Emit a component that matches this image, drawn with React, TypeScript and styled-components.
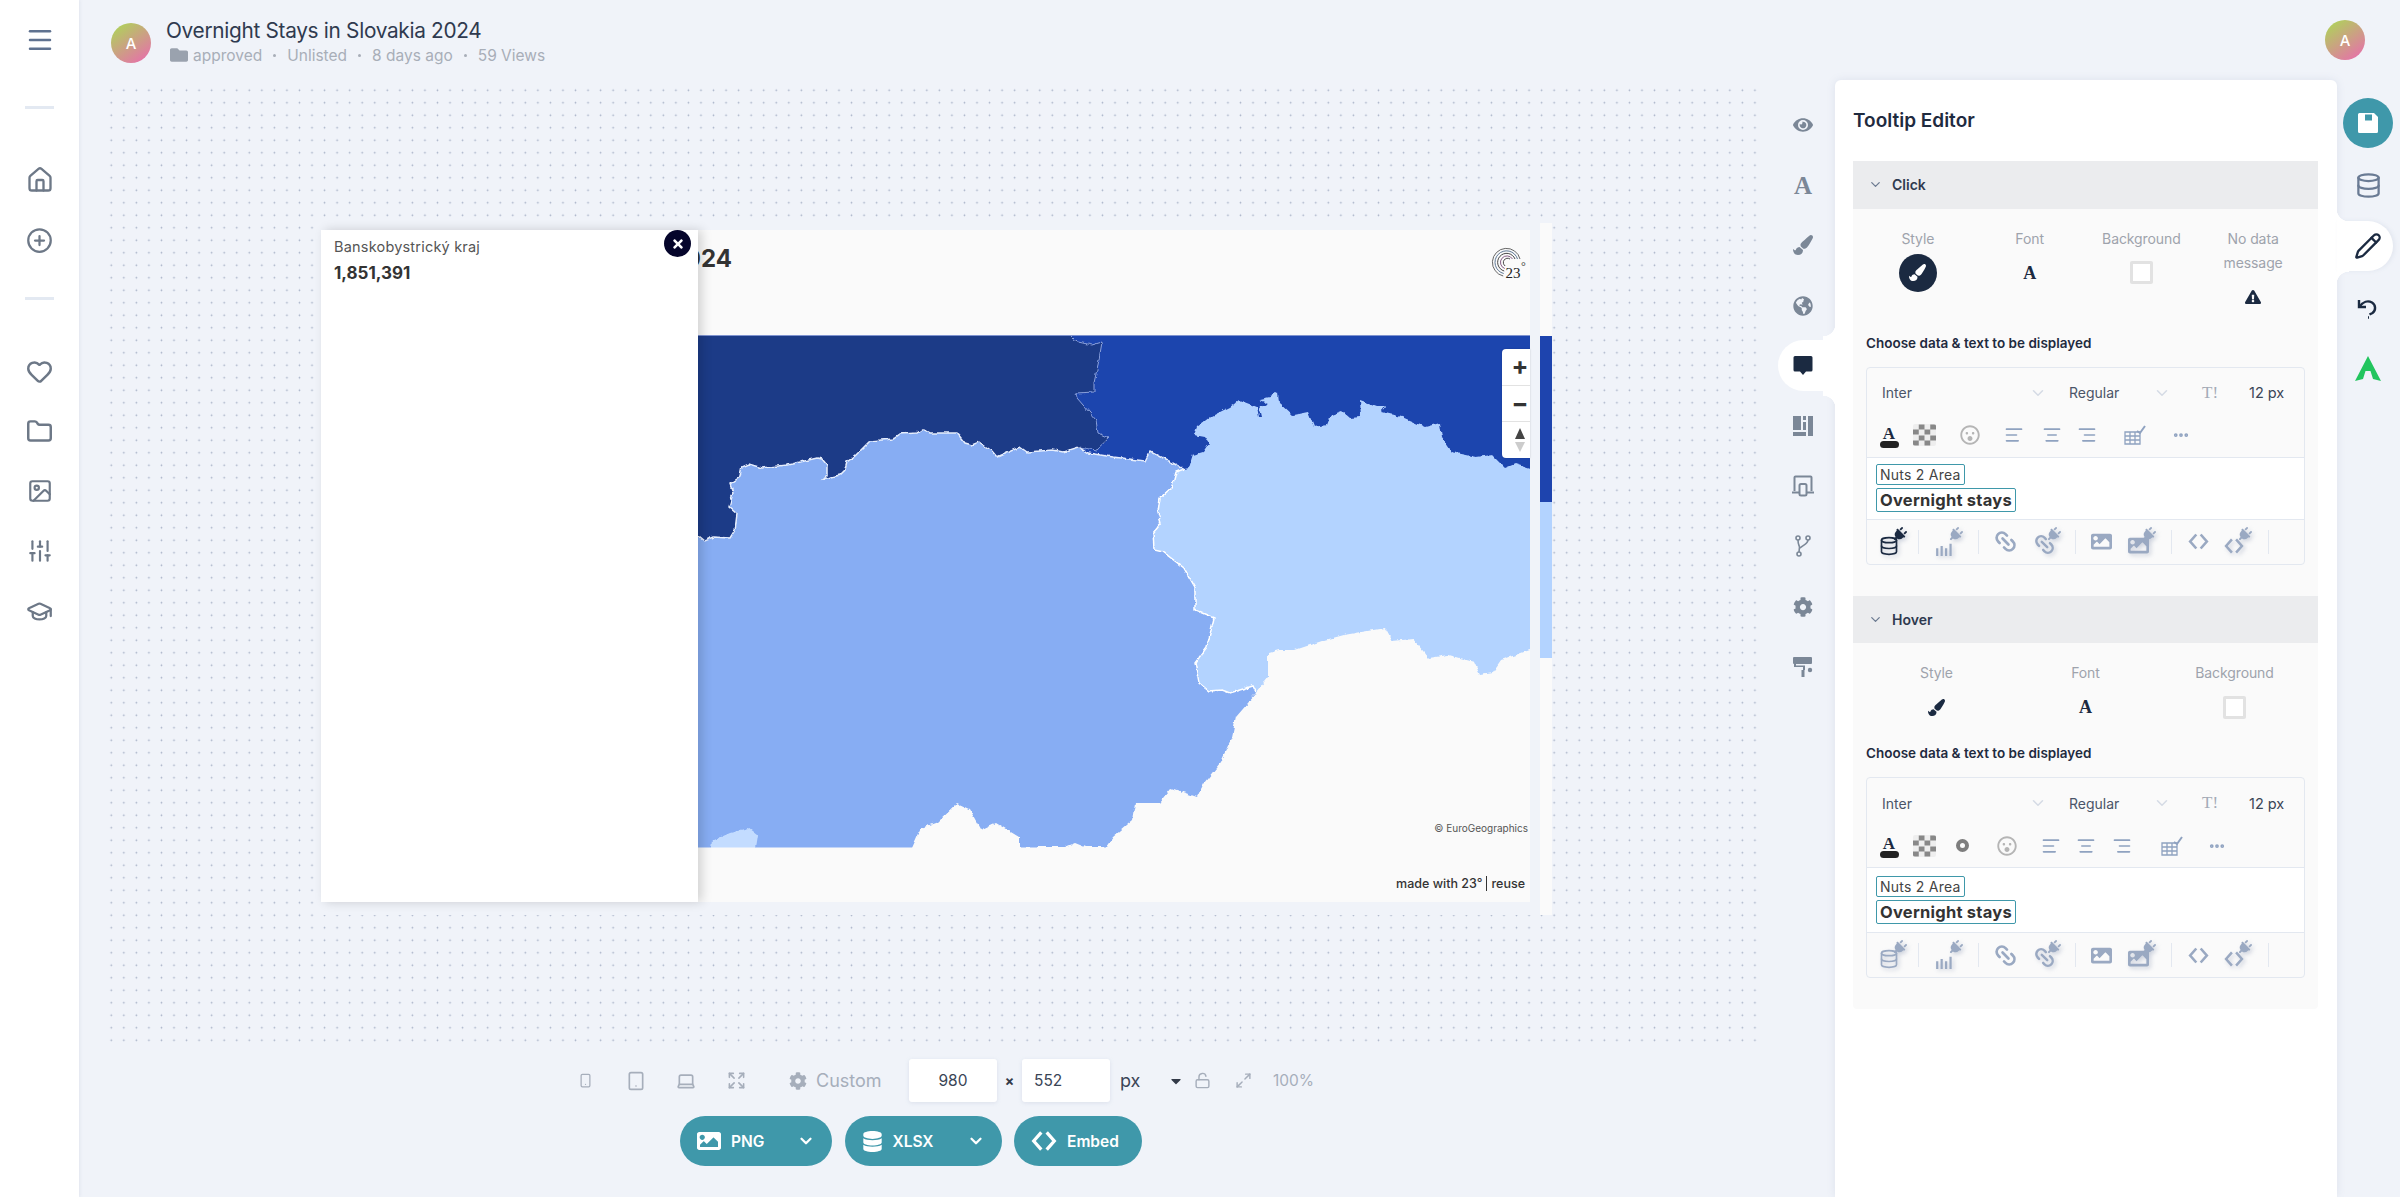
import React from "react";
import styled, { createGlobalStyle } from "styled-components";
import {
  AlignCenter,
  AlignLeft,
  AlignRight,
  ChevronDown,
  CirclePlus,
  Database,
  Ellipsis,
  Expand,
  Folder,
  GraduationCap,
  Heart,
  House,
  Image as ImageIcon,
  Laptop,
  Link2,
  LockOpen,
  Maximize2,
  Menu,
  Pencil,
  SlidersVertical,
  Smartphone,
  Tablet,
} from "lucide-react";
import {
  FaCaretDown,
  FaCog,
  FaDatabase,
  FaExclamationTriangle,
  FaEye,
  FaFolder,
  FaGlobeAmericas,
  FaImage,
  FaPaintBrush,
  FaPlug,
  FaRegSurprise,
  FaTimes,
} from "react-icons/fa";

const TEAL = "#3f98aa";
const NAVY = "#1b2a41";
const PAGE = "#f0f3f9";
const BODY_FONT = `Inter, "Noto Sans", sans-serif`;

const GlobalStyle = createGlobalStyle`
  html, body {
    margin: 0;
    padding: 0;
    background: ${PAGE};
    font-family: ${BODY_FONT};
  }
  * { box-sizing: border-box; }
`;

const Page = styled.div`
  display: flex;
  width: 2400px;
  height: 1197px;
  overflow: hidden;
  background: ${PAGE};
`;

/* left navigation */
const Sidebar = styled.nav`
  flex: 0 0 79px;
  display: flex;
  flex-direction: column;
  align-items: center;
  padding-top: 10px;
  background: #ffffff;
  box-shadow: 1px 0 3px rgba(120, 135, 165, 0.12);
  color: #6d7887;
`;

const NavItem = styled.div<{ $color?: string }>`
  display: flex;
  align-items: center;
  justify-content: center;
  flex: 0 0 60px;
  width: 100%;
  color: ${(p) => p.$color || "inherit"};
`;

const NavDivider = styled.div<{ $top: number; $bottom: number }>`
  flex: 0 0 3px;
  width: 29px;
  margin: ${(p) => p.$top}px 0 ${(p) => p.$bottom}px;
  background: #e3e9f2;
`;

const MainArea = styled.div`
  flex: 1;
  display: flex;
  flex-direction: column;
  min-width: 0;
`;

/* top header */
const Header = styled.header`
  flex: 0 0 80px;
  display: flex;
  align-items: center;
  padding: 0 35px 0 32px;
`;

const Identity = styled.div`
  display: flex;
  align-items: center;
  gap: 15px;
  margin-top: 6px;
`;

const Avatar = styled.div`
  display: flex;
  align-items: center;
  justify-content: center;
  width: 40px;
  height: 40px;
  border-radius: 50%;
  background: linear-gradient(145deg, #b0d05c 10%, #e573a8 90%);
  color: #ffffff;
  font-size: 15px;
  font-weight: 500;
`;

const AccountAvatar = styled(Avatar)`
  margin-left: auto;
`;

const TitleBlock = styled.div`
  display: flex;
  flex-direction: column;
  margin-top: -2px;
`;

const PageTitle = styled.div`
  font-size: 20.8px;
  line-height: 26px;
  letter-spacing: -0.3px;
  color: #2f3a4f;
`;

const MetaRow = styled.div`
  display: flex;
  align-items: center;
  height: 22px;
  padding-left: 4px;
  font-size: 15.5px;
  color: #a8aeb8;
`;

const MetaIcon = styled.span`
  display: flex;
  margin-right: 5px;
  color: #9aa2ae;
`;

const MetaDot = styled.span`
  width: 3px;
  height: 3px;
  margin: 0 11px;
  border-radius: 50%;
  background: #a8aeb8;
`;

const Workspace = styled.div`
  flex: 1;
  display: flex;
  min-height: 0;
`;

const CenterColumn = styled.div`
  flex: 0 0 1700px;
  display: flex;
  flex-direction: column;
  padding-top: 4px;
`;

/* dotted canvas with the chart */
const Canvas = styled.div`
  flex: 0 0 964px;
  width: 1660px;
  margin-left: 26px;
  padding: 139px 0 0 216px;
  background-image: radial-gradient(circle, #a3aec4 0.7px, transparent 1.1px);
  background-size: 12.55px 12.5px;
`;

const ChartFrame = styled.div`
  display: flex;
  width: 1231px;
  height: 692px;
  background: ${PAGE};
`;

const ChartCard = styled.div`
  position: relative;
  flex: 0 0 1209px;
  height: 672px;
  margin-top: 7px;
  display: flex;
  flex-direction: column;
  background: #fafafa;
`;

const OverflowStrip = styled.div`
  flex: 0 0 12px;
  margin-left: 10px;
  background: linear-gradient(
    #fafafa 0 113px,
    #1e44ae 113px 279px,
    #b3d3ff 279px 435px,
    #fafafa 435px
  );
`;

const ChartHeader = styled.div`
  flex: 0 0 106px;
  display: flex;
  align-items: flex-start;
  justify-content: space-between;
  padding-top: 14px;
`;

const ChartTitle = styled.div`
  width: 411px;
  text-align: right;
  white-space: nowrap;
  font-size: 24px;
  line-height: 30px;
  font-weight: 700;
  color: #333333;
`;

const LogoMark = styled.svg`
  width: 40px;
  height: 40px;
  margin-top: 1px;
`;

const MapArea = styled.div`
  position: relative;
  flex: 0 0 512px;
  box-shadow: 0 -1px 0 #7f93cf;
`;

const MapSvg = styled.svg`
  display: block;
  width: 1209px;
  height: 512px;
`;

const ZoomControl = styled.div`
  position: absolute;
  top: 13px;
  right: 0;
  display: flex;
  flex-direction: column;
  width: 28px;
  height: 109px;
  border-radius: 4px 0 0 4px;
  background: #ffffff;
  box-shadow: 0 0 2px rgba(0, 0, 0, 0.2);
`;

const ZoomButton = styled.div`
  flex: 1;
  display: flex;
  flex-direction: column;
  align-items: center;
  justify-content: center;
  gap: 3px;
  padding-left: 8px;
  border-bottom: 1px solid #e2e2e2;
  color: #333333;
  font-size: 25px;
  font-weight: 700;
  line-height: 1;
  &:last-child { border-bottom: 0; }
`;

const Triangle = styled.span<{ $down?: boolean }>`
  width: 0;
  height: 0;
  border-left: 5px solid transparent;
  border-right: 5px solid transparent;
  border-bottom: ${(p) => (p.$down ? "0" : "11px solid #444444")};
  border-top: ${(p) => (p.$down ? "10px solid #cccccc" : "0")};
`;

const Copyright = styled.div`
  position: absolute;
  right: 2px;
  bottom: 14px;
  font-size: 10px;
  line-height: 12px;
  color: #555555;
`;

const ChartFooter = styled.div`
  flex: 1;
  display: flex;
  align-items: center;
  justify-content: flex-end;
  padding: 16px 5px 0 0;
  font-size: 12.5px;
  font-weight: 500;
  color: #333333;
`;

const FooterBar = styled.span`
  width: 1px;
  height: 15px;
  margin: 0 4px;
  background: #333333;
`;

/* fixed tooltip shown over the chart */
const MapTooltip = styled.div`
  position: absolute;
  top: 0;
  left: 0;
  width: 377px;
  height: 672px;
  padding: 8px 13px;
  background: #ffffff;
  box-shadow: 4px 0 10px rgba(0, 0, 0, 0.16);
`;

const TooltipArea = styled.div`
  font-size: 14.5px;
  line-height: 18px;
  letter-spacing: 0.2px;
  color: #555555;
`;

const TooltipValue = styled.div`
  margin-top: 6px;
  font-size: 17px;
  line-height: 22px;
  font-weight: 700;
  color: #333333;
`;

const CloseButton = styled.div`
  position: absolute;
  top: 0;
  right: 7px;
  display: flex;
  align-items: center;
  justify-content: center;
  width: 27px;
  height: 27px;
  border-radius: 50%;
  background: #05052b;
  color: #ffffff;
`;

/* size controls under the canvas */
const SizeBar = styled.div`
  flex: 0 0 43px;
  display: flex;
  align-items: center;
  margin-top: 11px;
  padding-left: 491px;
  color: #a6aebb;
`;

const DeviceButton = styled.div`
  flex: 0 0 30px;
  display: flex;
  justify-content: center;
  margin-right: 20.5px;
`;

const CustomLabel = styled.div`
  display: flex;
  align-items: center;
  gap: 9px;
  width: 123px;
  margin-left: 14px;
  padding-left: 3px;
  font-size: 18px;
  color: #a6aebb;
`;

const SizeInput = styled.div<{ $left?: boolean }>`
  flex: 0 0 88px;
  height: 43px;
  padding-left: ${(p) => (p.$left ? "12px" : "0")};
  display: flex;
  align-items: center;
  justify-content: ${(p) => (p.$left ? "flex-start" : "center")};
  border-radius: 3px;
  background: #ffffff;
  box-shadow: 0 1px 4px rgba(130, 145, 175, 0.18);
  font-size: 15.5px;
  color: #3a4556;
`;

const Times = styled.div`
  flex: 0 0 25px;
  text-align: center;
  font-size: 14px;
  font-weight: 700;
  color: #333a48;
`;

const Unit = styled.div`
  flex: 0 0 55px;
  padding-left: 10px;
  font-size: 18px;
  color: #3a4556;
`;

const SizeTool = styled.div<{ $w: number; $color?: string }>`
  flex: 0 0 ${(p) => p.$w}px;
  display: flex;
  justify-content: center;
  color: ${(p) => p.$color || "#a6aebb"};
`;

const ZoomPercent = styled.div`
  margin-left: 4px;
  font-size: 15.5px;
  color: #a6aebb;
`;

const ExportBar = styled.div`
  display: flex;
  gap: 12.5px;
  margin-top: 14px;
  padding-left: 601px;
`;

const ExportButton = styled.div<{ $w: number }>`
  flex: 0 0 ${(p) => p.$w}px;
  display: flex;
  align-items: center;
  height: 50px;
  padding: 0 17px;
  border-radius: 25px;
  background: ${TEAL};
  color: #ffffff;
  font-size: 15.5px;
  font-weight: 600;
`;

const ExportLabel = styled.span`
  margin-left: 10px;
  flex: 1;
`;

/* tabs left of the panel */
const TabRail = styled.div`
  flex: 0 0 57px;
  margin-left: -1px;
  padding-top: 15px;
  color: #7b8797;
`;

const TabItem = styled.div<{ $active?: boolean }>`
  position: relative;
  display: flex;
  align-items: center;
  justify-content: center;
  height: 60.2px;
  padding-right: 7px;
  color: ${(p) => (p.$active ? NAVY : "inherit")};
  ${(p) =>
    p.$active &&
    `
    &::before {
      content: "";
      position: absolute;
      inset: 4.6px 0 4.6px 0;
      border-radius: 25.5px 0 0 25.5px;
      background: #ffffff;
    }
    &::after {
      content: "";
      position: absolute;
      top: -12px;
      bottom: -12px;
      right: 0;
      width: 12px;
      background:
        radial-gradient(circle at 0 0, transparent 12px, #fff 12.5px) 0 0 / 12px 17px no-repeat,
        radial-gradient(circle at 0 100%, transparent 12px, #fff 12.5px) 0 100% / 12px 17px no-repeat;
    }
    & > * { position: relative; z-index: 1; }
  `}
`;

const SerifGlyph = styled.span<{ $size: number; $color?: string }>`
  font-family: "Liberation Serif", serif;
  font-size: ${(p) => p.$size}px;
  line-height: 1;
  font-weight: 700;
  color: ${(p) => p.$color || "inherit"};
`;

/* editor panel */
const Panel = styled.aside`
  flex: 0 0 502px;
  padding: 0 19px 0 18px;
  border-radius: 6px 6px 0 0;
  background: #ffffff;
  box-shadow: 0 0 8px rgba(110, 125, 160, 0.14);
`;

const PanelTitle = styled.div`
  display: flex;
  align-items: center;
  height: 81px;
  font-size: 19px;
  font-weight: 600;
  color: #1f2b3f;
`;

const Section = styled.section`
  display: flow-root;
  background: #fafafa;
  &:last-child { border-radius: 0 0 4px 4px; }
`;

const SectionHeader = styled.div`
  display: flex;
  align-items: center;
  gap: 9px;
  height: 47.5px;
  padding-left: 15px;
  background: #ebecee;
  font-size: 14px;
  font-weight: 600;
  color: #2f3a4f;
`;

const OptionGrid = styled.div<{ $columns: number }>`
  display: grid;
  grid-template-columns: repeat(${(p) => p.$columns}, 1fr);
  padding: 18px 9px 0;
`;

const OptionCol = styled.div<{ $short?: boolean }>`
  display: flex;
  flex-direction: column;
  align-items: center;
  min-height: ${(p) => (p.$short ? 65 : 89)}px;
`;

const OptionLabel = styled.div`
  text-align: center;
  font-size: 14px;
  line-height: 24px;
  letter-spacing: -0.1px;
  color: #9ea3ac;
`;

const OptionIcon = styled.div<{ $selected?: boolean }>`
  display: flex;
  align-items: center;
  justify-content: center;
  width: 38px;
  height: 38px;
  margin-top: 3px;
  border-radius: 50%;
  background: ${(p) => (p.$selected ? NAVY : "transparent")};
  color: ${(p) => (p.$selected ? "#ffffff" : NAVY)};
`;

const EmptySwatch = styled.div`
  width: 23px;
  height: 23px;
  border: 3px solid #e2e2e2;
  border-radius: 2px;
  background: #ffffff;
`;

const ChooseLabel = styled.div`
  margin-top: 17px;
  padding-left: 13px;
  font-size: 13.5px;
  line-height: 20px;
  font-weight: 600;
  color: #1f2b3f;
`;

const EditorBox = styled.div`
  width: 439px;
  margin: 14px 0 31px 13px;
  border: 1px solid #e3e8f0;
  border-radius: 4px;
  background: #fafafa;
`;

const FontRow = styled.div`
  display: flex;
  align-items: center;
  height: 50px;
  padding-left: 15px;
  font-size: 14px;
  color: #4a5568;
`;

const FontSelect = styled.div<{ $w: number }>`
  flex: 0 0 ${(p) => p.$w}px;
  display: flex;
  align-items: center;
  justify-content: space-between;
  margin-right: 22px;
  color: #4a5568;
`;

const FaintChevron = styled(ChevronDown)`
  color: #d5dbe5;
`;

const FontSizeIcon = styled.span`
  flex: 0 0 24px;
  margin-left: 9px;
  font-family: "Liberation Serif", serif;
  font-size: 17px;
  color: #a4abb6;
`;

const FontSize = styled.div`
  margin-left: 23px;
  font-size: 14.5px;
  color: #3a4556;
`;

const FormatRow = styled.div`
  display: flex;
  align-items: center;
  height: 40px;
  padding: 0 0 4px 8px;
  border-bottom: 1px solid #e3e8f0;
  color: #8fa2c0;
`;

const Tool = styled.div<{ $w: number }>`
  flex: 0 0 ${(p) => p.$w}px;
  display: flex;
  justify-content: center;
  align-items: center;
`;

const ColorA = styled.div`
  display: flex;
  flex-direction: column;
  align-items: center;
  margin-top: 2px;
`;

const ColorBar = styled.div`
  width: 19px;
  height: 7px;
  margin-top: -1px;
  border-radius: 4px;
  background: #222222;
`;

const Checker = styled.div`
  width: 23px;
  height: 22px;
  border-radius: 2px;
  background: repeating-conic-gradient(#888888 0 25%, #eeeeee 0 50%) 50% / 11.5px 11px;
`;

const Ring = styled.div`
  width: 13px;
  height: 13px;
  border: 4px solid #7d7d7d;
  border-radius: 50%;
`;

const Content = styled.div<{ $tall?: boolean }>`
  display: flex;
  flex-direction: column;
  align-items: flex-start;
  gap: 3px;
  height: ${(p) => (p.$tall ? 65 : 62)}px;
  padding: ${(p) => (p.$tall ? 8 : 6)}px 0 0 9px;
  border-bottom: 1px solid #e3e8f0;
  background: #ffffff;
`;

const AreaChip = styled.div`
  height: 21px;
  padding: 0 3px;
  border: 1px solid ${TEAL};
  border-radius: 2px;
  font-size: 14px;
  line-height: 19px;
  letter-spacing: 0.25px;
  color: #444444;
`;

const ValueChip = styled.div`
  height: 24px;
  padding: 0 3px;
  border: 1px solid ${TEAL};
  border-radius: 2px;
  font-size: 16.5px;
  line-height: 22px;
  font-weight: 700;
  letter-spacing: 0.25px;
  color: #333333;
`;

const InsertRow = styled.div`
  display: flex;
  align-items: center;
  height: 44px;
`;

const InsertGroup = styled.div<{ $w: number }>`
  flex: 0 0 ${(p) => p.$w}px;
  height: 24px;
  display: flex;
  align-items: center;
  justify-content: space-evenly;
  border-right: 1px solid #e3e8f0;
`;

const PluggedIcon = styled.div<{ $dark?: boolean }>`
  position: relative;
  display: flex;
  align-items: flex-end;
  width: 28px;
  height: 28px;
  color: ${(p) => (p.$dark ? NAVY : "#9aa9c2")};
  filter: drop-shadow(2px 2px 2px rgba(120, 135, 165, 0.35));
`;

const PlugMark = styled.span`
  position: absolute;
  top: -1px;
  right: 0;
  display: flex;
  transform: rotate(45deg);
`;

const FlatIcon = styled.div`
  display: flex;
  color: #9aa9c2;
`;

/* rail right of the panel */
const RightRail = styled.div`
  flex: 0 0 62px;
  padding-top: 18px;
`;

const RailItem = styled.div<{ $active?: boolean; $color?: string }>`
  position: relative;
  display: flex;
  align-items: center;
  justify-content: center;
  width: 56px;
  height: 61px;
  padding-left: 6px;
  color: ${(p) => p.$color || "#6a7b94"};
  ${(p) =>
    p.$active &&
    `
    &::before {
      content: "";
      position: absolute;
      inset: 5.5px 0;
      border-radius: 0 25px 25px 0;
      background: #ffffff;
      box-shadow: 2px 0 4px rgba(110, 125, 160, 0.1);
    }
    &::after {
      content: "";
      position: absolute;
      top: -7px;
      bottom: -7px;
      left: 0;
      width: 12px;
      background:
        radial-gradient(circle at 100% 0, transparent 12px, #fff 12.5px) 0 0 / 12px 13px no-repeat,
        radial-gradient(circle at 100% 100%, transparent 12px, #fff 12.5px) 0 100% / 12px 13px no-repeat;
    }
    & > * { position: relative; z-index: 1; }
  `}
`;

const SaveButton = styled.div`
  display: flex;
  align-items: center;
  justify-content: center;
  width: 50px;
  height: 50px;
  margin: 0 0 6.5px 6px;
  border-radius: 50%;
  background: ${TEAL};
`;

const CodeIcon = ({ size, weight = 3 }: { size: number; weight?: number }) => (
  <svg width={size} height={size} viewBox="0 0 24 24" fill="none" stroke="currentColor" strokeWidth={weight}>
    <path d="M9.5 4 2.5 12l7 8M14.5 4l7 8-7 8" />
  </svg>
);

const CommentIcon = () => (
  <svg width="20" height="22" viewBox="0 0 20 22" fill="currentColor">
    <path d="M2 1h16a1.5 1.5 0 0 1 1.5 1.500V15a1.500 1.500 0 0 1-1.500 1.500h-5L10 20l-3-3.500H2A1.500 1.500 0 0 1 .5 15V2.500A1.500 1.500 0 0 1 2 1z" />
  </svg>
);

const LayoutIcon = () => (
  <svg width="20" height="20" viewBox="0 0 20 20" fill="currentColor">
    <path d="M0 0h8v14H0zM10 0h3v4h-3zM15 0h5v20h-5zM10 6h3v8h-3zM0 16h13v4H0z" />
  </svg>
);

const ScreenIcon = () => (
  <svg width="24" height="22" viewBox="0 0 24 22" fill="none" stroke="currentColor" strokeWidth="2">
    <path d="M3.500 16V2.500a1 1 0 0 1 1-1h15a1 1 0 0 1 1 1V16M1 17.500h7M16 17.500h7" />
    <rect x="8.500" y="9" width="7" height="11.500" rx="1.500" />
  </svg>
);

const ForkIcon = () => (
  <svg width="16" height="22" viewBox="0 0 16 22" fill="none" stroke="currentColor" strokeWidth="1.6">
    <circle cx="3" cy="3" r="2" />
    <circle cx="13" cy="3" r="2" />
    <circle cx="4" cy="19" r="2" />
    <path d="M3 5c0 4 1 5 1.500 7M13 5c0 4-5 5-8 8M4 17l.5-5" />
  </svg>
);

const RollerIcon = () => (
  <svg width="20" height="20" viewBox="0 0 20 20" fill="currentColor">
    <rect x="0" y="0" width="19" height="7" rx="1" />
    <path d="M1 7v3h9v3H8.500v7h3v-7H12V8.500H3V7z" />
    <circle cx="17" cy="13" r="2.200" />
  </svg>
);

const SaveGlyph = () => (
  <svg width="20" height="20" viewBox="0 0 20 20">
    <path d="M1.500 0H16l4 4v14.500a1.500 1.500 0 0 1-1.500 1.500h-17A1.500 1.500 0 0 1 0 18.500v-17A1.500 1.500 0 0 1 1.500 0z" fill="#ffffff" />
    <rect x="7" y="1.500" width="7" height="6" fill={TEAL} />
  </svg>
);

const UndoGlyph = () => (
  <svg width="24" height="24" viewBox="0 0 24 24" fill="none" stroke="currentColor" strokeWidth="2.400">
    <path d="M3 5v7h7" />
    <path d="M3.500 12C7 6.500 12 5.500 16 7.500c4 2.500 4 8 .5 10.500l-3 1.500" />
    <path d="M12 22.500h1" />
  </svg>
);

const GreenArrow = () => (
  <svg width="26" height="25" viewBox="0 0 26 25" fill="currentColor">
    <path d="M13 0 26 25l-8-2-2.500-8h-5L8 23 0 25z" />
  </svg>
);

const TableGlyph = () => (
  <svg width="22" height="20" viewBox="0 0 22 20" fill="none" stroke="currentColor" strokeWidth="1.300">
    <path d="M1 7h15v12H1zM1 11h15M1 15h15M6 7v12M11 7v12" />
    <path d="M13 6l3 2 5-7" strokeWidth="2" />
  </svg>
);

const ROUTE_DARK =
  "698,536 704,541 713,537 730,538 735,530 737,514 729,507 733,493 730,484 740,477 742,467 749,464 762,468 787,465 792,464 817,458 822,459 827,465 827,475 823,479 840,475 845,470 847,462 855,456 870,441 893,439 900,434 917,433 923,429 930,433 957,433 965,443 972,445 979,442 992,451 997,457 1020,447 1027,452 1053,450 1063,452 1079,447";
const ROUTE_MID_EAST =
  "1088,453 1113,457 1145,461 1150,451 1184,469";
const ROUTE_NE_BORDER =
  "1070,330 1070,336 1073,339 1078,342 1092,345 1102,342 1099,360 1094,383 1094,392 1076,393 1077,398 1096,420 1098,433 1109,438 1096,450 1079,447";
const ROUTE_LIGHT_MID =
  "1184,469 1176,472 1172,487 1160,498 1158,513 1161,523 1153,533 1154,550 1163,552 1184,568 1195,587 1195,610 1214,618 1207,647 1195,663 1199,683 1209,691 1222,690 1230,693 1253,686 1256,692";
const ROUTE_LIGHT_TOP =
  "1184,469 1189,468 1193,455 1203,452 1209,443 1205,437 1194,435 1197,427 1210,417 1230,407 1239,400 1257,407 1259,417 1261,417 1259,408 1268,403 1260,400 1270,398 1274,391 1278,393 1279,402 1293,415 1308,412 1314,427 1327,425 1331,415 1342,411 1350,418 1361,417 1360,400 1377,406 1386,406 1381,412 1402,417 1425,427 1440,423 1442,437 1452,452 1476,457 1492,455 1505,468 1515,464 1540,472";
const ROUTE_LIGHT_SOUTH =
  "1540,472 1540,647 1530,650 1501,660 1492,673 1480,675 1474,662 1448,655 1429,658 1413,639 1392,641 1385,628 1344,635 1325,640 1295,650 1279,650 1268,653 1268,677 1256,692";
const ROUTE_MID_SOUTH =
  "1255,695 1236,717 1232,737 1220,763 1204,783 1197,797 1171,788 1159,803 1136,803 1133,820 1113,837 1106,847 1085,847 1075,843 1065,847 1019,847 1019,837 996,823 981,830 970,810 957,804 938,822 921,828 912,848 905,860 321,860 321,536 698,536";

const RegionMap = () => (
  <MapSvg viewBox="321 336 1209 512">
    <defs>
      <filter id="rough-edge" filterUnits="userSpaceOnUse" x="300" y="320" width="1260" height="550">
        <feTurbulence type="fractalNoise" baseFrequency="0.16" numOctaves="2" seed="4" />
        <feDisplacementMap in="SourceGraphic" scale="4.5" xChannelSelector="R" yChannelSelector="G" />
      </filter>
    </defs>
    <rect x="321" y="336" width="1209" height="512" fill="#fafafa" />
    <g filter="url(#rough-edge)">
      <rect x="310" y="325" width="1240" height="151" fill="#1e44ae" />
      <polygon
        points={`310,325 1070,325 ${ROUTE_NE_BORDER} ${ROUTE_DARK.split(" ").reverse().join(" ")} 310,536`}
        fill="#1e3a87"
      />
      <polygon points={`${ROUTE_DARK} ${ROUTE_MID_EAST} ${ROUTE_LIGHT_MID} ${ROUTE_MID_SOUTH}`} fill="#87adf3" />
      <polygon points={`${ROUTE_LIGHT_TOP} ${ROUTE_LIGHT_SOUTH} ${ROUTE_LIGHT_MID.split(" ").reverse().join(" ")}`} fill="#b3d3ff" />
      <polygon points="709,860 712,841 730,833 749,828 758,835 754,860" fill="#c3dcff" />
      <polyline points={ROUTE_NE_BORDER} fill="none" stroke="#8aa2dc" strokeWidth="1" />
      <polyline points={`${ROUTE_DARK} ${ROUTE_MID_EAST}`} fill="none" stroke="#e6eefc" strokeWidth="1.500" />
      <polyline points={ROUTE_LIGHT_MID} fill="none" stroke="#ffffff" strokeWidth="1.500" />
    </g>
    <rect x="321" y="847.500" width="1209" height="1" fill="#fafafa" />
  </MapSvg>
);

const Logo = () => (
  <LogoMark viewBox="0 0 40 40">
    {[4, 6.5, 9, 11.5, 14].map((r, i) => (
      <path
        key={r}
        d={`M${16 + r} 14 A${r} ${r} 0 1 0 ${16 - r * 0.2} ${17 + r}`}
        fill="none"
        stroke={["#333", "#7a4d7a", "#333", "#4d6a8a", "#555"][i]}
        strokeWidth="0.9"
      />
    ))}
    <text x="15.500" y="33" fontFamily="Liberation Serif, serif" fontSize="15" fill="#222">
      23
    </text>
    <text x="31" y="25" fontFamily="Liberation Serif, serif" fontSize="12" fill="#444">
      °
    </text>
  </LogoMark>
);

const Plugged = ({ base, dark }: { base: React.ReactNode; dark?: boolean }) => (
  <PluggedIcon $dark={dark}>
    {base}
    <PlugMark>
      <FaPlug size={15} />
    </PlugMark>
  </PluggedIcon>
);

const BarsGlyph = () => (
  <svg width="20" height="20" viewBox="0 0 18 18" fill="currentColor">
    <path d="M1 11h2v7H1zM5 9h2v9H5zM9 11h2v7H9zM13 7h2v11h-2z" />
  </svg>
);

const ChainIcon = styled(Link2)`
  transform: rotate(45deg);
`;

const InsertTools = ({ dark }: { dark?: boolean }) => (
  <InsertRow>
    <InsertGroup $w={52}>
      <Plugged dark={dark} base={<Database size={20} strokeWidth={2} />} />
    </InsertGroup>
    <InsertGroup $w={60}>
      <Plugged base={<BarsGlyph />} />
    </InsertGroup>
    <InsertGroup $w={97}>
      <FlatIcon>
        <ChainIcon size={25} strokeWidth={2.6} />
      </FlatIcon>
      <Plugged base={<ChainIcon size={23} strokeWidth={2.6} />} />
    </InsertGroup>
    <InsertGroup $w={96}>
      <FlatIcon>
        <FaImage size={21} />
      </FlatIcon>
      <Plugged base={<FaImage size={21} />} />
    </InsertGroup>
    <InsertGroup $w={97}>
      <FlatIcon>
        <CodeIcon size={21} />
      </FlatIcon>
      <Plugged base={<CodeIcon size={20} />} />
    </InsertGroup>
  </InsertRow>
);

const FontControls = () => (
  <FontRow>
    <FontSelect $w={165}>
      Inter
      <FaintChevron size={18} />
    </FontSelect>
    <FontSelect $w={102}>
      Regular
      <FaintChevron size={18} />
    </FontSelect>
    <FontSizeIcon>T!</FontSizeIcon>
    <FontSize>12 px</FontSize>
  </FontRow>
);

const TipContent = ({ tall }: { tall?: boolean }) => (
  <Content $tall={tall}>
    <AreaChip>Nuts 2 Area</AreaChip>
    <ValueChip>Overnight stays</ValueChip>
  </Content>
);

const ColorTool = () => (
  <ColorA>
    <SerifGlyph $size={17} $color={NAVY}>
      A
    </SerifGlyph>
    <ColorBar />
  </ColorA>
);

export default function App() {
  return (
    <Page>
      <GlobalStyle />
      <Sidebar>
        <NavItem $color="#5f7290">
          <Menu size={30} strokeWidth={2} />
        </NavItem>
        <NavDivider $top={36} $bottom={41} />
        <NavItem>
          <House size={28} strokeWidth={2} />
        </NavItem>
        <NavItem>
          <CirclePlus size={27} strokeWidth={2} />
        </NavItem>
        <NavDivider $top={27} $bottom={41} />
        <NavItem>
          <Heart size={27} strokeWidth={2.2} />
        </NavItem>
        <NavItem>
          <Folder size={27} strokeWidth={2.2} />
        </NavItem>
        <NavItem>
          <ImageIcon size={26} strokeWidth={2} />
        </NavItem>
        <NavItem>
          <SlidersVertical size={26} strokeWidth={2} />
        </NavItem>
        <NavItem>
          <GraduationCap size={27} strokeWidth={2} />
        </NavItem>
      </Sidebar>

      <MainArea>
        <Header>
          <Identity>
            <Avatar>A</Avatar>
            <TitleBlock>
              <PageTitle>Overnight Stays in Slovakia 2024</PageTitle>
              <MetaRow>
                <MetaIcon>
                  <FaFolder size={18} />
                </MetaIcon>
                approved
                <MetaDot />
                Unlisted
                <MetaDot />8 days ago
                <MetaDot />
                59 Views
              </MetaRow>
            </TitleBlock>
          </Identity>
          <AccountAvatar>A</AccountAvatar>
        </Header>

        <Workspace>
          <CenterColumn>
            <Canvas>
              <ChartFrame>
                <ChartCard>
                  <ChartHeader>
                    <ChartTitle>Overnight Stays in Slovakia 2024</ChartTitle>
                    <Logo />
                  </ChartHeader>
                  <MapArea>
                    <RegionMap />
                    <ZoomControl>
                      <ZoomButton>+</ZoomButton>
                      <ZoomButton>−</ZoomButton>
                      <ZoomButton>
                        <Triangle />
                        <Triangle $down />
                      </ZoomButton>
                    </ZoomControl>
                    <Copyright>© EuroGeographics</Copyright>
                  </MapArea>
                  <ChartFooter>
                    made with 23°
                    <FooterBar />
                    reuse
                  </ChartFooter>
                  <MapTooltip>
                    <TooltipArea>Banskobystrický kraj</TooltipArea>
                    <TooltipValue>1,851,391</TooltipValue>
                    <CloseButton>
                      <FaTimes size={14} />
                    </CloseButton>
                  </MapTooltip>
                </ChartCard>
                <OverflowStrip />
              </ChartFrame>
            </Canvas>

            <SizeBar>
              <DeviceButton>
                <Smartphone size={15} />
              </DeviceButton>
              <DeviceButton>
                <Tablet size={20} />
              </DeviceButton>
              <DeviceButton>
                <Laptop size={20} />
              </DeviceButton>
              <DeviceButton>
                <Expand size={19} />
              </DeviceButton>
              <CustomLabel>
                <FaCog size={18} />
                Custom
              </CustomLabel>
              <SizeInput>980</SizeInput>
              <Times>×</Times>
              <SizeInput $left>552</SizeInput>
              <Unit>px</Unit>
              <SizeTool $w={22} $color="#333a48">
                <FaCaretDown size={16} />
              </SizeTool>
              <SizeTool $w={30}>
                <LockOpen size={17} />
              </SizeTool>
              <SizeTool $w={52}>
                <Maximize2 size={17} />
              </SizeTool>
              <ZoomPercent>100%</ZoomPercent>
            </SizeBar>

            <ExportBar>
              <ExportButton $w={152}>
                <FaImage size={24} />
                <ExportLabel>PNG</ExportLabel>
                <ChevronDown size={18} strokeWidth={3} />
              </ExportButton>
              <ExportButton $w={157}>
                <FaDatabase size={21} />
                <ExportLabel>XLSX</ExportLabel>
                <ChevronDown size={18} strokeWidth={3} />
              </ExportButton>
              <ExportButton $w={128}>
                <CodeIcon size={26} />
                <ExportLabel>Embed</ExportLabel>
              </ExportButton>
            </ExportBar>
          </CenterColumn>

          <TabRail>
            <TabItem>
              <FaEye size={20} />
            </TabItem>
            <TabItem>
              <SerifGlyph $size={25}>A</SerifGlyph>
            </TabItem>
            <TabItem>
              <FaPaintBrush size={20} />
            </TabItem>
            <TabItem>
              <FaGlobeAmericas size={20} />
            </TabItem>
            <TabItem $active>
              <CommentIcon />
            </TabItem>
            <TabItem>
              <LayoutIcon />
            </TabItem>
            <TabItem>
              <ScreenIcon />
            </TabItem>
            <TabItem>
              <ForkIcon />
            </TabItem>
            <TabItem>
              <FaCog size={20} />
            </TabItem>
            <TabItem>
              <RollerIcon />
            </TabItem>
          </TabRail>

          <Panel>
            <PanelTitle>Tooltip Editor</PanelTitle>

            <Section>
              <SectionHeader>
                <ChevronDown size={15} color="#6b7a90" />
                Click
              </SectionHeader>
              <OptionGrid $columns={4}>
                <OptionCol>
                  <OptionLabel>Style</OptionLabel>
                  <OptionIcon $selected>
                    <FaPaintBrush size={17} />
                  </OptionIcon>
                </OptionCol>
                <OptionCol>
                  <OptionLabel>Font</OptionLabel>
                  <OptionIcon>
                    <SerifGlyph $size={18}>A</SerifGlyph>
                  </OptionIcon>
                </OptionCol>
                <OptionCol>
                  <OptionLabel>Background</OptionLabel>
                  <OptionIcon>
                    <EmptySwatch />
                  </OptionIcon>
                </OptionCol>
                <OptionCol>
                  <OptionLabel>
                    No data
                    <br />
                    message
                  </OptionLabel>
                  <OptionIcon>
                    <FaExclamationTriangle size={16} />
                  </OptionIcon>
                </OptionCol>
              </OptionGrid>
              <ChooseLabel>Choose data &amp; text to be displayed</ChooseLabel>
              <EditorBox>
                <FontControls />
                <FormatRow>
                  <Tool $w={28}>
                    <ColorTool />
                  </Tool>
                  <Tool $w={43}>
                    <Checker />
                  </Tool>
                  <Tool $w={48}>
                    <FaRegSurprise size={20} color="#b5b5b5" />
                  </Tool>
                  <Tool $w={40}>
                    <AlignLeft size={20} />
                  </Tool>
                  <Tool $w={35}>
                    <AlignCenter size={20} />
                  </Tool>
                  <Tool $w={35}>
                    <AlignRight size={20} />
                  </Tool>
                  <Tool $w={62}>
                    <TableGlyph />
                  </Tool>
                  <Tool $w={30}>
                    <Ellipsis size={18} strokeWidth={3} />
                  </Tool>
                </FormatRow>
                <TipContent />
                <InsertTools dark />
              </EditorBox>
            </Section>

            <Section>
              <SectionHeader>
                <ChevronDown size={15} color="#6b7a90" />
                Hover
              </SectionHeader>
              <OptionGrid $columns={3}>
                <OptionCol $short>
                  <OptionLabel>Style</OptionLabel>
                  <OptionIcon>
                    <FaPaintBrush size={17} />
                  </OptionIcon>
                </OptionCol>
                <OptionCol $short>
                  <OptionLabel>Font</OptionLabel>
                  <OptionIcon>
                    <SerifGlyph $size={18}>A</SerifGlyph>
                  </OptionIcon>
                </OptionCol>
                <OptionCol $short>
                  <OptionLabel>Background</OptionLabel>
                  <OptionIcon>
                    <EmptySwatch />
                  </OptionIcon>
                </OptionCol>
              </OptionGrid>
              <ChooseLabel>Choose data &amp; text to be displayed</ChooseLabel>
              <EditorBox>
                <FontControls />
                <FormatRow>
                  <Tool $w={28}>
                    <ColorTool />
                  </Tool>
                  <Tool $w={43}>
                    <Checker />
                  </Tool>
                  <Tool $w={32}>
                    <Ring />
                  </Tool>
                  <Tool $w={58}>
                    <FaRegSurprise size={20} color="#b5b5b5" />
                  </Tool>
                  <Tool $w={30}>
                    <AlignLeft size={20} />
                  </Tool>
                  <Tool $w={40}>
                    <AlignCenter size={20} />
                  </Tool>
                  <Tool $w={32}>
                    <AlignRight size={20} />
                  </Tool>
                  <Tool $w={68}>
                    <TableGlyph />
                  </Tool>
                  <Tool $w={22}>
                    <Ellipsis size={18} strokeWidth={3} />
                  </Tool>
                </FormatRow>
                <TipContent tall />
                <InsertTools />
              </EditorBox>
            </Section>
          </Panel>

          <RightRail>
            <SaveButton>
              <SaveGlyph />
            </SaveButton>
            <RailItem>
              <Database size={27} strokeWidth={2} />
            </RailItem>
            <RailItem $active $color={NAVY}>
              <Pencil size={28} strokeWidth={2} />
            </RailItem>
            <RailItem $color={NAVY}>
              <UndoGlyph />
            </RailItem>
            <RailItem $color="#22c55e">
              <GreenArrow />
            </RailItem>
          </RightRail>
        </Workspace>
      </MainArea>
    </Page>
  );
}
